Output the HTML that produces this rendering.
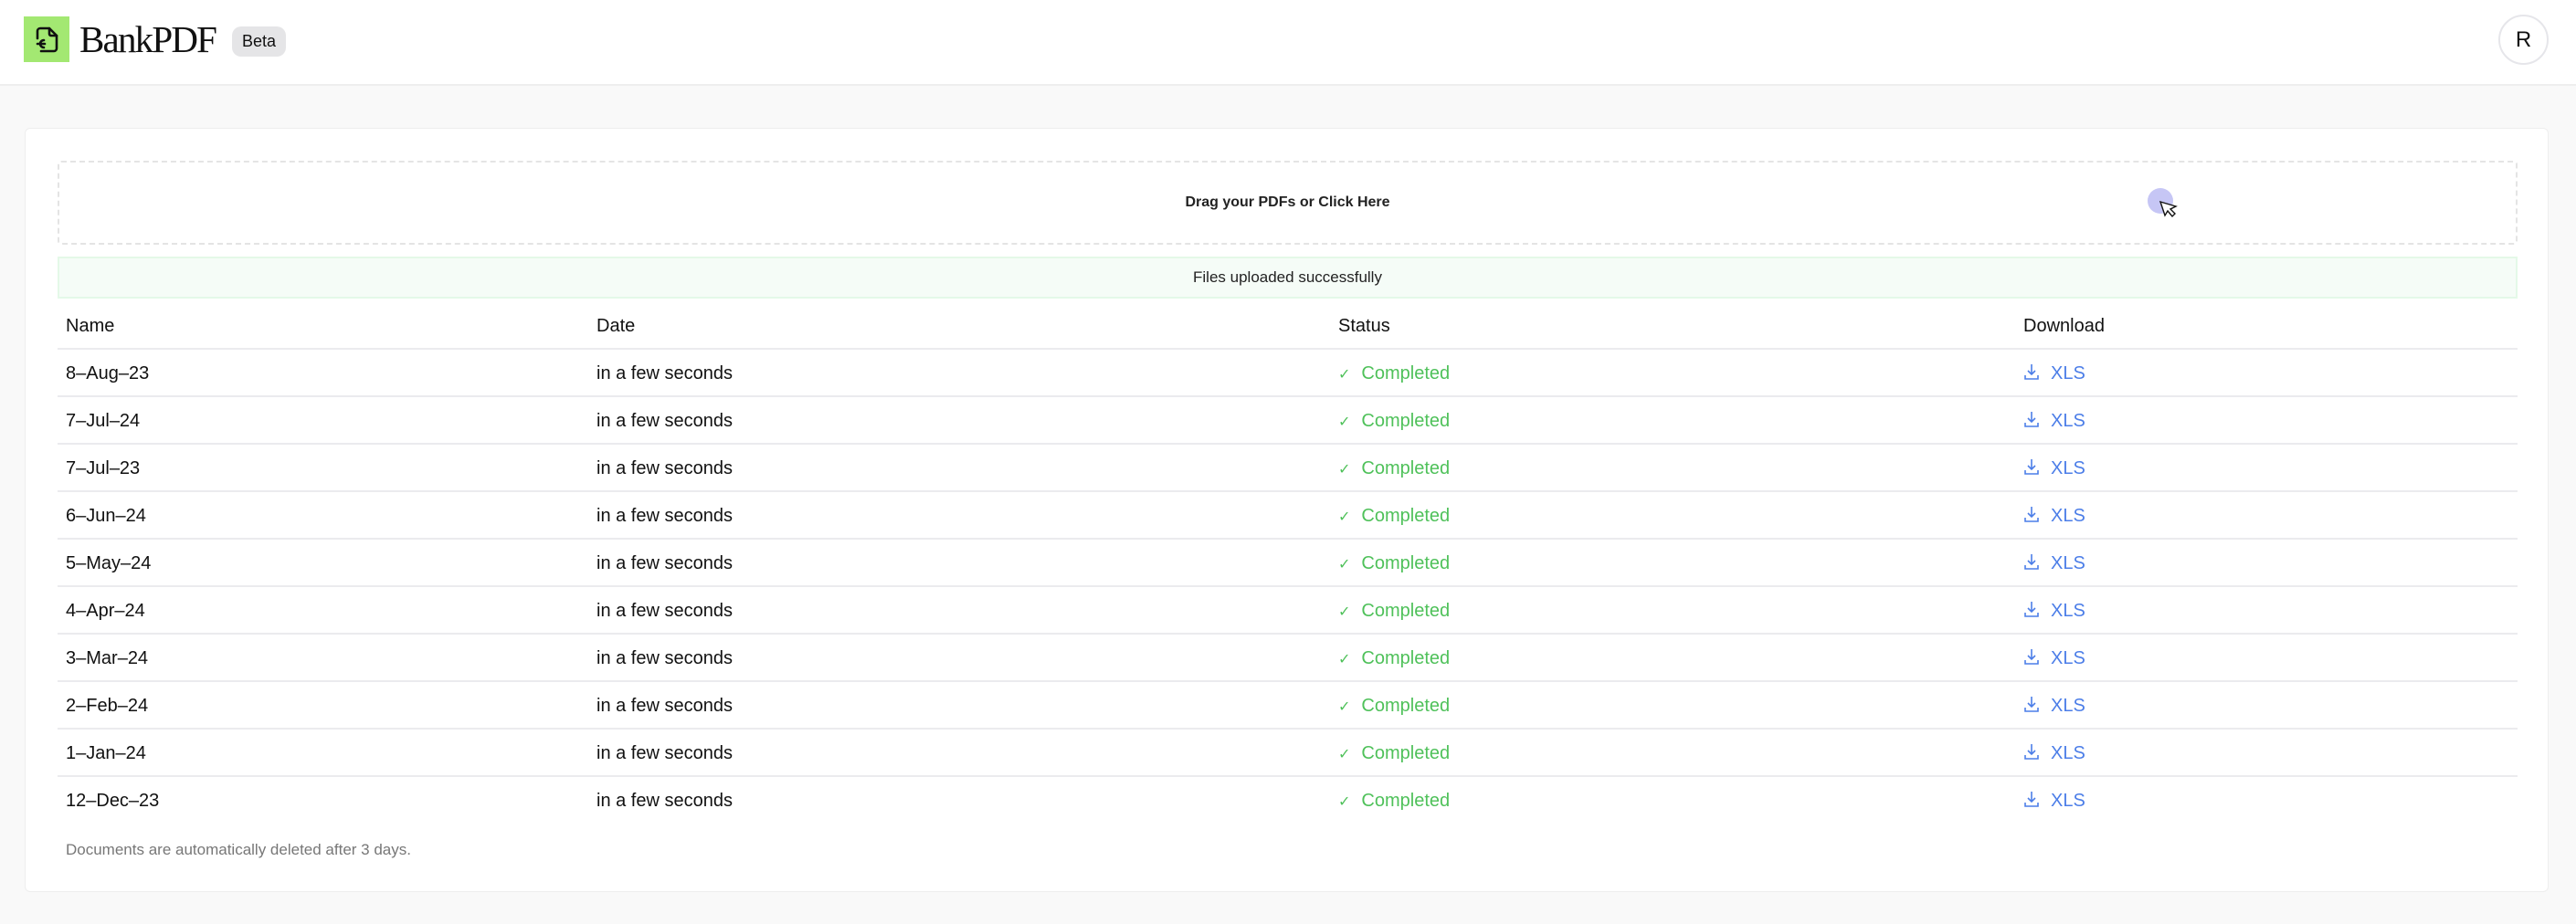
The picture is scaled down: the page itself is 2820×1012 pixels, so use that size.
<!DOCTYPE html>
<html><head><meta charset="utf-8"><style>
*{box-sizing:border-box;margin:0;padding:0}
body{width:2820px;height:1012px;background:#f9f9f9;font-family:"Liberation Sans",sans-serif;color:#111;position:relative;overflow:hidden}
.hdr{position:absolute;left:0;top:0;width:2820px;height:94px;background:#fff;border-bottom:2px solid #eee}
.logo{position:absolute;left:26px;top:18px;width:50px;height:50px;background:#a3e872}
.brand{position:absolute;left:87px;top:19px;font-family:"Liberation Serif",serif;font-size:41px;letter-spacing:-1.8px;color:#111;line-height:48px}
.beta{position:absolute;left:254px;top:29px;width:59px;height:33px;border-radius:10px;background:#e5e5e7;font-size:18px;text-align:center;line-height:33px}
.av{position:absolute;left:2735px;top:16px;width:55px;height:55px;border-radius:50%;border:2px solid #e6e6ea;text-align:center;line-height:52px;font-size:24px;background:#fff}
.card{position:absolute;left:27px;top:140px;width:2763px;height:837px;background:#fff;border:1px solid #eee;border-radius:6px}
.drop{position:absolute;left:63px;top:176px;width:2693px;height:92px;border:2px dashed #e4e4e4;border-radius:4px;text-align:center;line-height:88px;font-size:16px;font-weight:bold;color:#222}
.ok{position:absolute;left:63px;top:281px;width:2693px;height:46px;background:#f5fcf7;border:2px solid #e4f9e8;text-align:center;line-height:42px;font-size:17px;color:#222}
.row{position:absolute;left:63px;width:2693px;height:52px;border-bottom:2px solid #ebebee;font-size:20px}
.row span{position:absolute;top:0;line-height:52px}
.c1{left:9px}.c2{left:590px}.c3{left:1402px;color:#4fc15a}.c4{left:2152px;color:#4c7ee8}
.c3 i,.c4 i{font-style:normal;font-size:16px;margin-right:12px}
.c4 svg{vertical-align:-2px;margin-right:12px}
.foot{position:absolute;left:72px;top:921px;font-size:17px;color:#777}
</style></head><body>
<div class="hdr">
<div class="logo"><svg width="50" height="50" viewBox="0 0 50 50" fill="none" stroke="#111" stroke-width="2.6" stroke-linecap="round" stroke-linejoin="round"><path d="M15 24V16a3 3 0 0 1 3-3h10l8 8v14a3 3 0 0 1-3 3H19"/><path d="M28 13v6a2 2 0 0 0 2 2h6"/><path d="M23 30h-8M22 26a4 4 0 1 0 0 8"/></svg></div>
<div class="brand">BankPDF</div>
<div class="beta">Beta</div>
<div class="av">R</div>
</div>
<div class="card"></div>
<div class="drop">Drag your PDFs or Click Here</div>
<svg style="position:absolute;left:2350px;top:205px" width="50" height="45" viewBox="0 0 50 45"><circle cx="15" cy="15" r="14" fill="#c6c6f5"/><path d="M15 16l5 15 3-5 5 6 3-3-5-5 6-3z" fill="#fff" stroke="#111" stroke-width="1.4"/></svg>
<div class="ok">Files uploaded successfully</div>
<div class="row" style="top:331px"><span class="c1">Name</span><span class="c2">Date</span><span class="c3" style="color:#111">Status</span><span class="c4" style="color:#111">Download</span></div>
<div class="row" style="top:383px"><span class="c1">8–Aug–23</span><span class="c2">in a few seconds</span><span class="c3"><i>✓</i>Completed</span><span class="c4"><svg width="18" height="20" viewBox="0 0 18 20" fill="none" stroke="#4c7ee8" stroke-width="1.6"><path d="M9 2v11M5 9l4 4 4-4M2 14v4h14v-4"/></svg>XLS</span></div>
<div class="row" style="top:435px"><span class="c1">7–Jul–24</span><span class="c2">in a few seconds</span><span class="c3"><i>✓</i>Completed</span><span class="c4"><svg width="18" height="20" viewBox="0 0 18 20" fill="none" stroke="#4c7ee8" stroke-width="1.6"><path d="M9 2v11M5 9l4 4 4-4M2 14v4h14v-4"/></svg>XLS</span></div>
<div class="row" style="top:487px"><span class="c1">7–Jul–23</span><span class="c2">in a few seconds</span><span class="c3"><i>✓</i>Completed</span><span class="c4"><svg width="18" height="20" viewBox="0 0 18 20" fill="none" stroke="#4c7ee8" stroke-width="1.6"><path d="M9 2v11M5 9l4 4 4-4M2 14v4h14v-4"/></svg>XLS</span></div>
<div class="row" style="top:539px"><span class="c1">6–Jun–24</span><span class="c2">in a few seconds</span><span class="c3"><i>✓</i>Completed</span><span class="c4"><svg width="18" height="20" viewBox="0 0 18 20" fill="none" stroke="#4c7ee8" stroke-width="1.6"><path d="M9 2v11M5 9l4 4 4-4M2 14v4h14v-4"/></svg>XLS</span></div>
<div class="row" style="top:591px"><span class="c1">5–May–24</span><span class="c2">in a few seconds</span><span class="c3"><i>✓</i>Completed</span><span class="c4"><svg width="18" height="20" viewBox="0 0 18 20" fill="none" stroke="#4c7ee8" stroke-width="1.6"><path d="M9 2v11M5 9l4 4 4-4M2 14v4h14v-4"/></svg>XLS</span></div>
<div class="row" style="top:643px"><span class="c1">4–Apr–24</span><span class="c2">in a few seconds</span><span class="c3"><i>✓</i>Completed</span><span class="c4"><svg width="18" height="20" viewBox="0 0 18 20" fill="none" stroke="#4c7ee8" stroke-width="1.6"><path d="M9 2v11M5 9l4 4 4-4M2 14v4h14v-4"/></svg>XLS</span></div>
<div class="row" style="top:695px"><span class="c1">3–Mar–24</span><span class="c2">in a few seconds</span><span class="c3"><i>✓</i>Completed</span><span class="c4"><svg width="18" height="20" viewBox="0 0 18 20" fill="none" stroke="#4c7ee8" stroke-width="1.6"><path d="M9 2v11M5 9l4 4 4-4M2 14v4h14v-4"/></svg>XLS</span></div>
<div class="row" style="top:747px"><span class="c1">2–Feb–24</span><span class="c2">in a few seconds</span><span class="c3"><i>✓</i>Completed</span><span class="c4"><svg width="18" height="20" viewBox="0 0 18 20" fill="none" stroke="#4c7ee8" stroke-width="1.6"><path d="M9 2v11M5 9l4 4 4-4M2 14v4h14v-4"/></svg>XLS</span></div>
<div class="row" style="top:799px"><span class="c1">1–Jan–24</span><span class="c2">in a few seconds</span><span class="c3"><i>✓</i>Completed</span><span class="c4"><svg width="18" height="20" viewBox="0 0 18 20" fill="none" stroke="#4c7ee8" stroke-width="1.6"><path d="M9 2v11M5 9l4 4 4-4M2 14v4h14v-4"/></svg>XLS</span></div>
<div class="row" style="top:851px;border-bottom:none"><span class="c1">12–Dec–23</span><span class="c2">in a few seconds</span><span class="c3"><i>✓</i>Completed</span><span class="c4"><svg width="18" height="20" viewBox="0 0 18 20" fill="none" stroke="#4c7ee8" stroke-width="1.6"><path d="M9 2v11M5 9l4 4 4-4M2 14v4h14v-4"/></svg>XLS</span></div>
<div class="foot">Documents are automatically deleted after 3 days.</div>
</body></html>
